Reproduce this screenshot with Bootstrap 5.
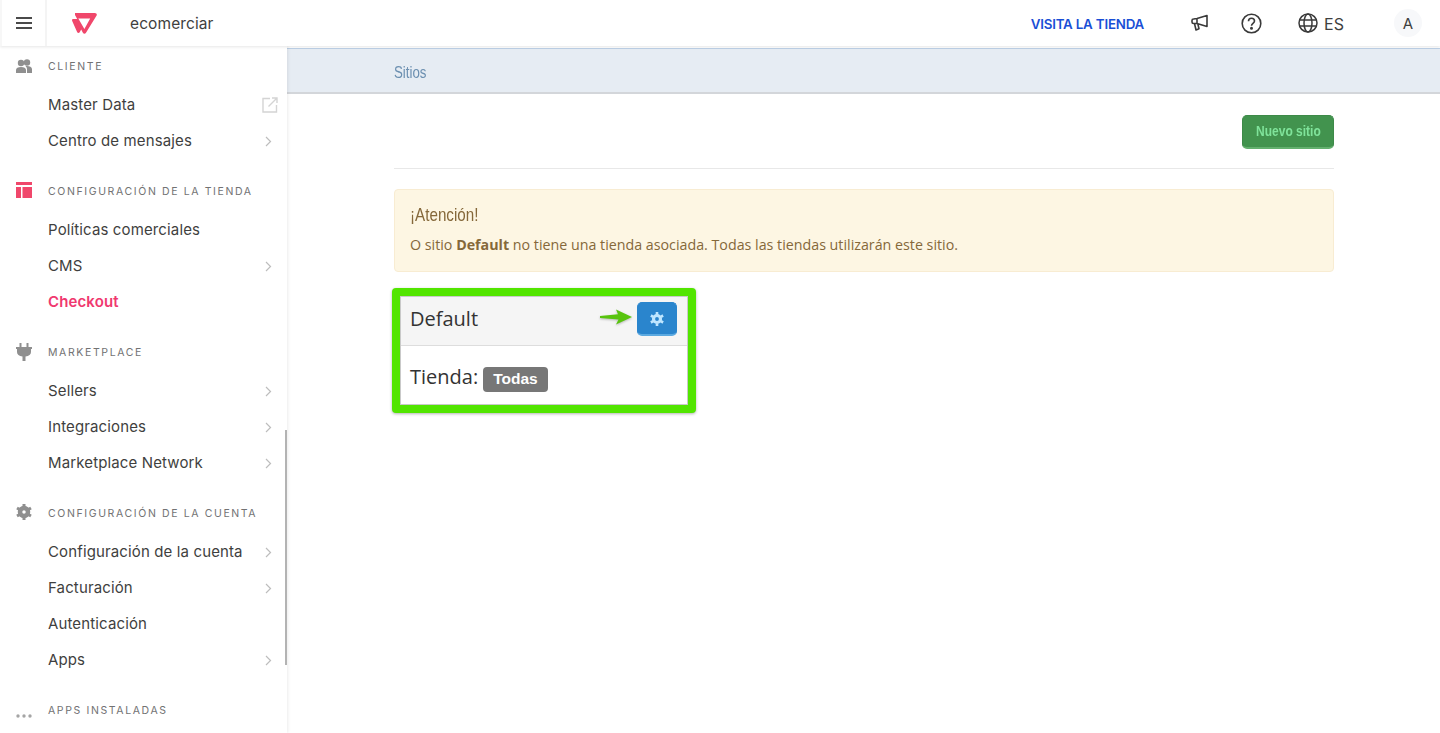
<!doctype html>
<html lang="es"><head><meta charset="utf-8"><title>Sitios</title>
<link href="https://cdn.jsdelivr.net/npm/bootstrap@5.3.0/dist/css/bootstrap.min.css" rel="stylesheet">
<style>
html,body{height:733px;overflow:hidden}
body{font-family:Inter,"Liberation Sans",sans-serif;color:#3f3f40;background:#fff}
.topbar{height:46px;background:#fff;box-shadow:0 1px 3px rgba(0,0,0,.1);position:relative;z-index:3}
.burger{width:47px;height:46px;border-left:2px solid #f7f7f7;border-right:2px solid #f4f4f4}
.brandlogo{margin-left:25px;margin-right:33px}
.brandname{font-size:15.5px;letter-spacing:.1px;color:#3f3f40;padding-top:2px}
.visit{font-size:13.35px;font-weight:600;color:#1a4fd6;text-decoration:none;letter-spacing:-.2px;margin-right:47px;padding-top:2px}
.horn{margin-right:32px}
.help{margin-right:36px}
.globe{margin-right:6px}
.lang{font-size:16px;margin-right:50px;color:#3f3f40;padding-top:1px}
.avatar{width:28px;height:28px;border-radius:50%;background:#f7f8fa;font-size:15px;margin-right:18px;padding-top:2px}
.shell{height:687px}
.sidenav{width:287px;flex:none;height:687px;overflow:hidden;background:#fff;box-shadow:1px 0 3px rgba(0,0,0,.08);position:relative;z-index:2}
.thumb{position:absolute;right:0;top:384px;width:2px;height:235px;background:#b3b3b3}
.navhead{height:20px;font-size:10.5px;letter-spacing:1.62px;color:#727273;line-height:20px}
.navhead svg{flex:none;margin-left:16px;margin-right:16px}
.navhead .lift2{margin-top:-2px}
.navhead .lift4{margin-top:-4px}
.navhead .dropdots{margin-top:9px}
.navgroup{margin-bottom:23px}
.navgroup.top{margin-top:11px}
.navlink{height:36px;padding:0 15px 0 48px;font-size:15px;letter-spacing:.13px;color:#3f3f40;text-decoration:none}
.navlink .outward{margin-right:-6px}
.navlink.current{color:#f0386f;font-weight:600}
.first{margin-top:10px}
.mainpane{flex:1 1 auto;min-width:0}
.crumbbar{height:46px;margin-top:2px;background:#e6ecf3;border-top:1px solid #bcd0e6;border-bottom:2px solid #d3d6da;padding:4px 0 0 107px;font-family:"Liberation Sans",sans-serif;font-size:16px;color:#6b8fb0}
.crumbtext{display:inline-block;transform:scaleX(.83);transform-origin:left center}
.sheet{width:940px;margin-left:107px}
.actions{height:75px;border-bottom:1px solid #e8e8e8;padding-top:21px}
.newsite{height:34px;width:92px;padding:0;background:#42934e;border:1px solid #3d8a48;border-bottom:2px solid #63b06e;border-radius:5px;color:#7fe39a;font-family:"Liberation Sans",sans-serif;font-weight:700;font-size:15px}
.newsite span{display:inline-block;transform:scaleX(.8)}
.notice{margin-top:20px;height:83px;background:#fdf6e3;border:1px solid #f8ecd2;border-radius:4px;padding:14px 15px;color:#85683a;font-family:"Open Sans","Liberation Sans",sans-serif;font-size:14.25px}
.notice h5{font-family:"Liberation Sans",sans-serif;font-size:19px;font-weight:400;margin:0 0 8px;color:#85683a;line-height:22px;transform:scaleX(.8);transform-origin:left center}
.sitecard{margin-top:16px;margin-left:-2px;width:304px;border:8px solid #52e500;border-radius:4px;box-shadow:0 1px 3px rgba(0,0,0,.3);background:#fff;outline:1px solid #c9c9c9;outline-offset:-9px;font-family:"Open Sans","Liberation Sans",sans-serif;color:#333}
.sitehead{height:50px;background:#f5f5f5;border-bottom:1px solid #ddd;padding:2px 11px 5px 10px;font-size:20px}
.pointer{margin-top:-5px;margin-right:4px;filter:drop-shadow(0 1px 1px rgba(0,0,0,.25))}
.gearbtn{width:40px;height:34px;padding:0;background:#2a85cd;border:1px solid #2a85cd;border-bottom:2px solid #5ba9e0;border-radius:5px}
.sitebody{height:59px;padding:0 10px;font-size:20px}
.storelabel{margin-top:2px}
.tagpill{background:#777;color:#fff;font-weight:700;font-size:15.5px;border-radius:4px;padding:0 10px;height:25px;margin-left:5px;margin-top:7px;line-height:24px;font-family:"Liberation Sans",sans-serif}
</style></head><body>
<header class="topbar d-flex align-items-center">
  <div class="burger d-flex align-items-center justify-content-center">
    <svg width="16" height="12" viewBox="0 0 16 12"><path d="M0 1h16M0 6h16M0 11h16" stroke="#4a4a4a" stroke-width="1.8"/></svg>
  </div>
  <svg class="brandlogo" width="25" height="21" viewBox="0 0 25 21"><path fill="#f0476b" fill-rule="evenodd" d="M3 0h19.800c1.500 0 2.500 1.200 1.800 2.500L14 19.700c-.8 1.300-2.400 1.300-3.100 0L9.200 16.500l-1.500 2.800c-.6 1-1.900 1-2.500 0L.2 8C-.3 7 .3 6 1.300 6h3.900L3 2zM6.300 5.500 12.400 16 18.200 5.500z"/></svg>
  <span class="brandname">ecomerciar</span>
  <div class="ms-auto d-flex align-items-center">
    <a class="visit" href="#">VISITA LA TIENDA</a>
    <svg class="horn" width="18" height="18" viewBox="0 0 18 18" fill="none" stroke="#3a3a3a" stroke-width="1.600" stroke-linejoin="round"><path d="M16 1.500v11L6 9.500H2.500C1.500 9.500 1 9 1 8V6.500C1 5.500 1.500 5 2.500 5L6 4.500zM6 4.500v5M3.500 9.500l1.500 6.500 3-1.200-1.200-5"/></svg>
    <svg class="help" width="21" height="21" viewBox="0 0 21 21" fill="none" stroke="#3a3a3a" stroke-width="1.600"><circle cx="10.500" cy="10.500" r="9.300"/><path d="M7.500 8.200c0-1.800 1.300-3 3-3s3 1.200 3 2.800c0 2.300-3 2.400-3 4.700"/><circle cx="10.500" cy="15.300" r=".7" fill="#3a3a3a"/></svg>
    <svg class="globe" width="20" height="20" viewBox="0 0 20 20" fill="none" stroke="#3a3a3a" stroke-width="1.500"><circle cx="10" cy="10" r="9"/><ellipse cx="10" cy="10" rx="4" ry="9"/><path d="M1.500 7h17M1.500 13h17"/></svg>
    <span class="lang">ES</span>
    <span class="avatar d-flex align-items-center justify-content-center">A</span>
  </div>
</header>
<div class="shell d-flex">
  <nav class="sidenav">
    <div class="navgroup top">
      <div class="navhead d-flex align-items-center"><svg class="lift2" width="16" height="14" viewBox="0 0 16 14" fill="#8f8f8f"><circle cx="5" cy="4" r="3.200"/><circle cx="11" cy="3.500" r="3.200"/><path d="M0 14v-3c0-2 2-3 5-3s5 1 5 3v3zM11 14v-4c0-1-.5-2-1.500-3 3-.5 6.500.5 6.500 3v4z"/></svg>CLIENTE</div>
      <a class="navlink first d-flex align-items-center justify-content-between" href="#">Master Data<svg class="outward" width="16" height="16" viewBox="0 0 16 16" fill="none" stroke="#d4d4d4" stroke-width="1.400"><path d="M8 1.500H1v13.500h13.500V8M6.500 9.500 15 1M10 1h5v5"/></svg></a>
      <a class="navlink d-flex align-items-center justify-content-between" href="#">Centro de mensajes<svg width="7" height="11" viewBox="0 0 7 11" fill="none" stroke="#bdbdbd" stroke-width="1.200"><path d="m1 1 4.500 4.500L1 10"/></svg></a>
    </div>
    <div class="navgroup">
      <div class="navhead d-flex align-items-center"><svg class="lift4" width="16" height="16" viewBox="0 0 16 16" fill="#f0476b"><path d="M0 0h16v3H0zM0 5h5v11H0zM6.500 5H16v11H6.500z"/></svg>CONFIGURACIÓN DE LA TIENDA</div>
      <a class="navlink first d-flex align-items-center" href="#">Políticas comerciales</a>
      <a class="navlink d-flex align-items-center justify-content-between" href="#">CMS<svg width="7" height="11" viewBox="0 0 7 11" fill="none" stroke="#bdbdbd" stroke-width="1.200"><path d="m1 1 4.500 4.500L1 10"/></svg></a>
      <a class="navlink current d-flex align-items-center" href="#">Checkout</a>
    </div>
    <div class="navgroup">
      <div class="navhead d-flex align-items-center"><svg class="lift2" width="16" height="18" viewBox="0 0 16 18" fill="#8f8f8f"><path d="M3.500 0h2v4h5V0h2v4H16v2h-1v3c0 2.500-2 4-5.500 4.500V18h-3v-4.500C3 13 1 11.500 1 9V6H0V4h3.500z"/></svg>MARKETPLACE</div>
      <a class="navlink first d-flex align-items-center justify-content-between" href="#">Sellers<svg width="7" height="11" viewBox="0 0 7 11" fill="none" stroke="#bdbdbd" stroke-width="1.200"><path d="m1 1 4.500 4.500L1 10"/></svg></a>
      <a class="navlink d-flex align-items-center justify-content-between" href="#">Integraciones<svg width="7" height="11" viewBox="0 0 7 11" fill="none" stroke="#bdbdbd" stroke-width="1.200"><path d="m1 1 4.500 4.500L1 10"/></svg></a>
      <a class="navlink d-flex align-items-center justify-content-between" href="#">Marketplace Network<svg width="7" height="11" viewBox="0 0 7 11" fill="none" stroke="#bdbdbd" stroke-width="1.200"><path d="m1 1 4.500 4.500L1 10"/></svg></a>
    </div>
    <div class="navgroup">
      <div class="navhead d-flex align-items-center"><svg class="lift4" width="16" height="16" viewBox="0 0 16 16"><circle cx="8" cy="8" r="4" fill="none" stroke="#8f8f8f" stroke-width="4.500"/><path stroke="#8f8f8f" stroke-width="3" d="M8 0v3M8 13v3M1 4l2.600 1.500M12.400 10.500 15 12M1 12l2.600-1.500M12.400 5.500 15 4"/></svg>CONFIGURACIÓN DE LA CUENTA</div>
      <a class="navlink first d-flex align-items-center justify-content-between" href="#">Configuración de la cuenta<svg width="7" height="11" viewBox="0 0 7 11" fill="none" stroke="#bdbdbd" stroke-width="1.200"><path d="m1 1 4.500 4.500L1 10"/></svg></a>
      <a class="navlink d-flex align-items-center justify-content-between" href="#">Facturación<svg width="7" height="11" viewBox="0 0 7 11" fill="none" stroke="#bdbdbd" stroke-width="1.200"><path d="m1 1 4.500 4.500L1 10"/></svg></a>
      <a class="navlink d-flex align-items-center" href="#">Autenticación</a>
      <a class="navlink d-flex align-items-center justify-content-between" href="#">Apps<svg width="7" height="11" viewBox="0 0 7 11" fill="none" stroke="#bdbdbd" stroke-width="1.200"><path d="m1 1 4.500 4.500L1 10"/></svg></a>
    </div>
    <div class="navhead d-flex align-items-center"><svg class="dropdots" width="16" height="4" viewBox="0 0 16 4" fill="#a5a5a5"><circle cx="2" cy="2" r="1.700"/><circle cx="8" cy="2" r="1.700"/><circle cx="14" cy="2" r="1.700"/></svg>APPS INSTALADAS</div>
    <div class="thumb"></div>
  </nav>
  <main class="mainpane">
    <div class="crumbbar d-flex align-items-center"><span class="crumbtext">Sitios</span></div>
    <div class="sheet">
      <div class="actions d-flex justify-content-end align-items-start"><button class="btn newsite" type="button"><span>Nuevo sitio</span></button></div>
      <div class="notice"><h5>¡Atención!</h5><div>O sitio <strong>Default</strong> no tiene una tienda asociada. Todas las tiendas utilizarán este sitio.</div></div>
      <div class="sitecard">
        <div class="sitehead d-flex align-items-center justify-content-between"><span>Default</span><span class="d-flex align-items-center">
          <svg class="pointer" width="34" height="16" viewBox="0 0 34 16"><path fill="#58c40e" d="M1 7 19 5.300 17 .5 33 8 17 15.500l2.500-5L1 9z"/></svg>
          <button class="btn gearbtn d-flex align-items-center justify-content-center" type="button"><svg width="14" height="14" viewBox="0 0 16 16"><circle cx="8" cy="8" r="4" fill="none" stroke="#bfe6ff" stroke-width="3.600"/><path stroke="#bfe6ff" stroke-width="3" d="M8 0v3M8 13v3M1 4l2.600 1.500M12.400 10.500 15 12M1 12l2.600-1.500M12.400 5.500 15 4"/></svg></button></span></div>
        <div class="sitebody d-flex align-items-center"><span class="storelabel">Tienda:</span><span class="tagpill">Todas</span></div>
      </div>
    </div>
  </main>
</div>
</body></html>
